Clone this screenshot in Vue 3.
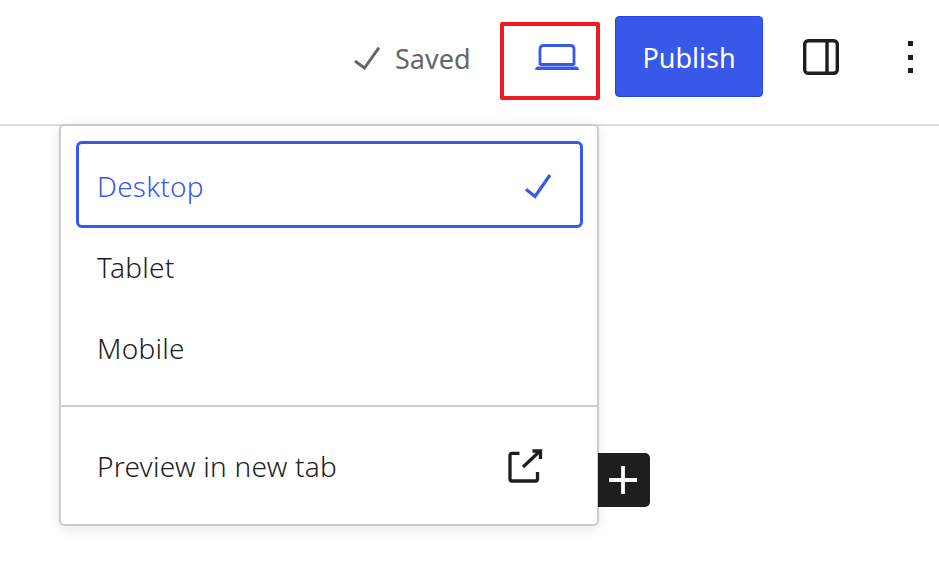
<template>
  <div class="editor">
    <header class="topbar">
      <div class="saved">
        <svg viewBox="0 0 26 24" width="26" height="24" fill="none">
          <path d="M1 15 L10.500 22 L25 1.500" stroke="#666" stroke-width="3" />
        </svg>
        <span>Saved</span>
      </div>
      <div class="preview-toggle">
        <svg viewBox="0 0 44 26" width="44" height="26" fill="none">
          <path d="M5 21 V5 Q5 1.500 8.500 1.500 H35.500 Q39 1.500 39 5 V21" stroke="#3858e9" stroke-width="2.800" />
          <path d="M5 20.500 H39" stroke="#3858e9" stroke-width="2.800" />
          <path d="M0 26 Q0.500 22.500 3 22.500 H41 Q43.500 22.500 44 26 Z" fill="#3858e9" />
        </svg>
      </div>
      <button class="publish">Publish</button>
      <div class="settings">
        <svg viewBox="0 0 36 36" width="36" height="36" fill="none">
          <rect x="1.700" y="1.700" width="32.600" height="32.600" rx="3.500" stroke="#1e1e1e" stroke-width="3.400" />
          <path d="M24 2 V34" stroke="#1e1e1e" stroke-width="3.400" />
        </svg>
      </div>
      <div class="more">
        <span class="dot"></span>
        <span class="dot"></span>
        <span class="dot"></span>
      </div>
    </header>

    <main class="canvas">
      <div class="popover">
        <div class="group">
          <div
            v-for="item in devices"
            :key="item.label"
            class="row"
            :class="{ selected: item.selected }"
          >
            <span>{{ item.label }}</span>
            <svg v-if="item.selected" viewBox="0 0 30 26" width="30" height="26" fill="none">
              <path d="M3 16.300 L12 23.500 L27 2" stroke="#3858e9" stroke-width="3.200" />
            </svg>
          </div>
        </div>
        <div class="group last">
          <div class="row preview">
            <span>Preview in new tab</span>
            <svg viewBox="0 0 36 36" width="36" height="36" fill="none">
              <path d="M12.500 5.300 H5 Q3 5.300 3 7.300 V31 Q3 33 5 33 H28.500 Q30.500 33 30.500 31 V24" stroke="#1e1e1e" stroke-width="3.300" />
              <path d="M16 19 L33 3" stroke="#1e1e1e" stroke-width="3.300" />
              <path d="M25.500 3 H33.500 V11" stroke="#1e1e1e" stroke-width="3.300" />
            </svg>
          </div>
        </div>
      </div>
      <div class="inserter">
        <svg viewBox="0 0 28 28" width="28" height="28" fill="none">
          <path d="M14 0 V28 M0 14 H28" stroke="#fff" stroke-width="3.800" />
        </svg>
      </div>
    </main>
  </div>
</template>

<script setup>
const devices = [
  { label: 'Desktop', selected: true },
  { label: 'Tablet', selected: false },
  { label: 'Mobile', selected: false },
]
</script>

<style>
html,
body {
  margin: 0;
  background: #fff;
}
</style>

<style scoped>
.editor {
  width: 939px;
  height: 584px;
  overflow: hidden;
  font-family: 'Noto Sans', 'Open Sans', sans-serif;
  color: #1e1e1e;
  background: #fff;
}

/* top bar */
.topbar {
  display: flex;
  align-items: flex-start;
  box-sizing: border-box;
  height: 126px;
  padding-left: 354px;
  border-bottom: 2px solid #ddd;
}

.saved {
  display: flex;
  align-items: center;
  gap: 15px;
  width: 146px;
  height: 116px;
  font-size: 27px;
  color: #666;
}

.preview-toggle {
  display: flex;
  justify-content: center;
  box-sizing: border-box;
  width: 100px;
  height: 78px;
  margin-top: 22px;
  padding-top: 18px;
  padding-left: 14px;
  border: 4px solid #ed1c24;
  border-radius: 2px;
}

.publish {
  width: 148px;
  height: 81px;
  margin: 16px 0 0 15px;
  padding-top: 2px;
  border: 1px solid #2145e6;
  border-radius: 4px;
  background: #3858e9;
  color: #fff;
  font-family: inherit;
  font-size: 27px;
}

.settings {
  margin: 39px 0 0 40px;
  height: 36px;
}

.more {
  display: flex;
  flex-direction: column;
  gap: 8.5px;
  margin: 41px 0 0 69px;
}

.dot {
  width: 5px;
  height: 5px;
  background: #1e1e1e;
}

/* canvas + dropdown */
.canvas {
  position: relative;
  padding-left: 59px;
  margin-top: -2px;
}

.popover {
  box-sizing: border-box;
  width: 540px;
  height: 402px;
  border: 2px solid #ccc;
  border-radius: 5px;
  background: #fff;
  box-shadow: 0 3px 12px rgba(0, 0, 0, 0.1);
}

.group {
  padding: 15px 14px 15px 15px;
  border-bottom: 2px solid #ccc;
}

.group.last {
  border-bottom: 0;
  padding-bottom: 0;
}

.row {
  display: flex;
  align-items: center;
  justify-content: space-between;
  box-sizing: border-box;
  height: 81px;
  padding: 0 21px 4px;
  font-size: 28px;
  font-weight: 360;
  letter-spacing: 0.25px;
}

.row.selected {
  height: 87px;
  padding: 2px 27px 0 18px;
  border: 3px solid #3858e9;
  border-radius: 6px;
  color: #3858e9;
}

.row.preview {
  height: 89px;
  padding-right: 40px;
  padding-bottom: 2px;
}

.inserter {
  position: absolute;
  left: 598px;
  top: 329px;
  display: flex;
  align-items: center;
  justify-content: center;
  box-sizing: border-box;
  width: 52px;
  height: 54px;
  padding-right: 2px;
  border-radius: 0 5px 5px 0;
  background: #1e1e1e;
}
</style>
